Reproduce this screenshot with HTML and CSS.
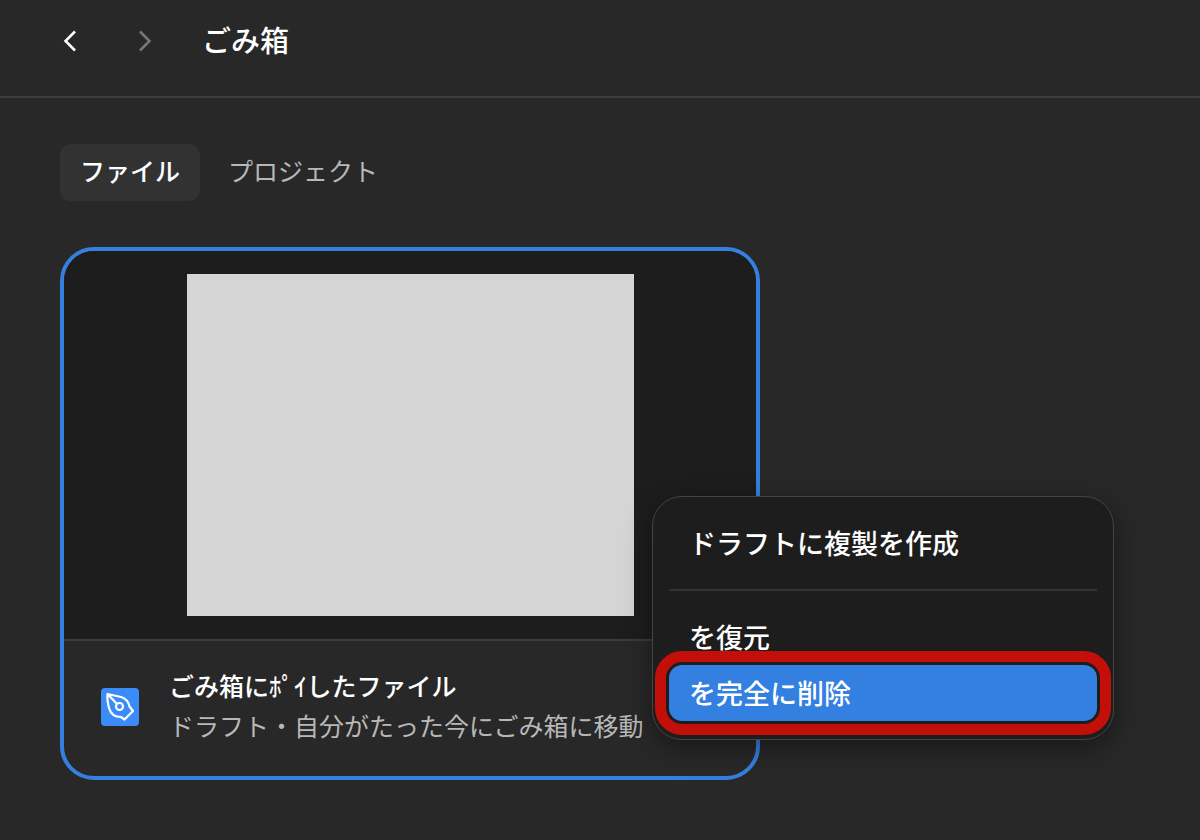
FILE: index.html
```html
<!DOCTYPE html>
<html lang="ja">
<head>
    <meta charset="UTF-8">
    <meta name="viewport" content="width=device-width, initial-scale=1.0">
    <title>ごみ箱</title>
    <link rel="stylesheet" href="styles.css">
</head>
<body>
    <header class="topbar">
        <button class="nav-btn" type="button" aria-label="戻る">
            <svg width="14" height="22" viewBox="0 0 14 22"><path d="M12 1.5L2.5 11L12 20.5"/></svg>
        </button>
        <button class="nav-btn nav-next" type="button" aria-label="進む">
            <svg width="14" height="22" viewBox="0 0 14 22"><path d="M2 1.5L11.5 11L2 20.5"/></svg>
        </button>
        <h1 class="title">ごみ箱</h1>
    </header>

    <main class="content">
        <nav class="tabs">
            <button class="tab active" type="button">ファイル</button>
            <button class="tab" type="button">プロジェクト</button>
        </nav>

        <div class="file">
            <article class="card">
                <div class="preview">
                    <div class="thumb"></div>
                </div>
                <div class="info">
                    <svg class="file-icon" width="38" height="38" viewBox="0 0 38 38">
                        <rect width="38" height="38" rx="4" fill="#3b8cf8" stroke="none"/>
                        <path d="M6.5 6L20 9C25 10.500 27.500 14 28.500 18.500L32 23L23.500 31.500L20 29C13 29 9.500 25.500 8 20C7 16 6 11 6.500 6ZM6.500 6L16 16"/>
                        <circle cx="18.500" cy="18.500" r="3.500"/>
                    </svg>
                    <div class="file-text">
                        <h2 class="file-name">ごみ箱にﾎﾟｲしたファイル</h2>
                        <p class="file-meta">ドラフト・自分がたった今にごみ箱に移動</p>
                    </div>
                </div>
            </article>

            <div class="menu" role="menu">
                <button class="menu-item" type="button" role="menuitem">ドラフトに複製を作成</button>
                <hr class="menu-line">
                <button class="menu-item" type="button" role="menuitem">を復元</button>
                <button class="menu-item selected" type="button" role="menuitem">を完全に削除</button>
            </div>
        </div>
    </main>
</body>
</html>
```

FILE: styles.css
```css
* {
    margin: 0;
    padding: 0;
    box-sizing: border-box;
}

body {
    min-height: 100vh;
    background: #282828;
    color: #fff;
    font-family: 'Noto Sans CJK JP', sans-serif;
}

button {
    border: none;
    background: none;
    color: inherit;
    font-family: inherit;
    cursor: pointer;
}

/* Header */
.topbar {
    display: flex;
    align-items: center;
    padding: 18px 60px 32px;
    border-bottom: 2px solid #3c3c3c;
}

.nav-btn {
    display: flex;
    justify-content: center;
    width: 20px;
    margin-right: 55px;
}

.nav-btn svg {
    fill: none;
    stroke: #fff;
    stroke-width: 2.5;
}

.nav-next {
    margin-right: 47px;
}

.nav-next svg {
    stroke: #777;
}

.title {
    padding-bottom: 4px;
    font-size: 29px;
    font-weight: 500;
    line-height: 42px;
}

/* Tabs */
.content {
    padding: 46px 60px;
}

.tabs {
    display: flex;
    gap: 8px;
    margin-bottom: 46px;
}

.tab {
    padding: 6px 20px 10px;
    border-radius: 11px;
    color: #b8b8b8;
    font-size: 25px;
    line-height: 41px;
}

.tab.active {
    background: #323232;
    color: #fff;
    font-weight: 500;
}

/* File card */
.file {
    position: relative;
    max-width: 700px;
}

.card {
    border: 4px solid #3580df;
    border-radius: 34px;
    overflow: hidden;
}

.preview {
    padding: 23px;
    background: #1d1d1d;
    border-bottom: 2px solid #3c3c3c;
}

.thumb {
    width: 447px;
    max-width: 100%;
    aspect-ratio: 447 / 342;
    margin: 0 auto;
    background: #d5d5d5;
}

.info {
    display: flex;
    align-items: center;
    gap: 30px;
    padding: 24px 37px 27px;
}

.file-icon {
    flex-shrink: 0;
    fill: none;
    stroke: #fff;
    stroke-width: 2.2;
    stroke-linejoin: round;
}

.file-text {
    padding-bottom: 4px;
}

.file-name,
.file-meta {
    font-size: 25px;
    line-height: 40px;
    white-space: nowrap;
}

.file-name {
    font-weight: 500;
}

.file-meta {
    color: #b8b8b8;
}

/* Context menu */
.menu {
    position: absolute;
    top: 249px;
    left: 592px;
    display: flex;
    flex-direction: column;
    width: 462px;
    padding: 18px 16px;
    border: 1px solid #444;
    border-radius: 30px;
    background: #1d1d1d;
    box-shadow: 0 8px 28px rgba(0, 0, 0, 0.4);
}

.menu-item {
    padding: 8px 20px;
    border-radius: 13px;
    font-size: 27px;
    font-weight: 500;
    line-height: 40px;
    text-align: left;
}

.menu-line {
    margin: 18px 0;
    border: none;
    border-top: 2px solid #333;
}

.menu-item.selected {
    background: #3380e0;
    outline: 11px solid #c20f0a;
    outline-offset: 3px;
}
```
